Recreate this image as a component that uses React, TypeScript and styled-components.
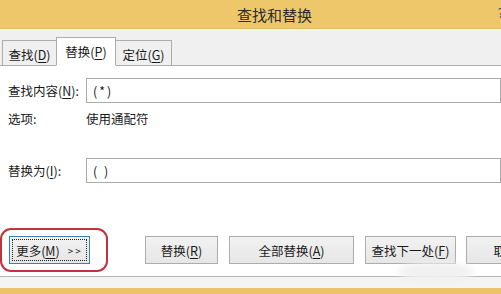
import React from "react";
import styled, { createGlobalStyle } from "styled-components";

const Global = createGlobalStyle`
  html, body { margin: 0; padding: 0; background: #fff; }
  body { font-family: "Noto Sans CJK SC", "Liberation Sans", sans-serif; }
`;

const Window = styled.div`
  width: 501px;
  height: 294px;
  overflow: hidden;
  display: flex;
  flex-direction: column;
  position: relative;
  background: #fff;
  color: #1a1a1a;
  font-size: 12px;
`;

const TitleBar = styled.div`
  height: 28px;
  flex: none;
  background: #efc76b;
  border-bottom: 1px solid #dfbb68;
  display: flex;
  align-items: center;
  padding-left: 237px;
  position: relative;
`;

const Title = styled.span`
  font-size: 15px;
  color: #2b2b2b;
`;

const Help = styled.span`
  position: absolute;
  right: -3px;
  top: 3px;
  font-size: 13px;
  color: #444;
`;

const TabStrip = styled.div`
  height: 36px;
  flex: none;
  background: #f0f0f0;
  border-bottom: 1px solid #adadad;
  display: flex;
  align-items: flex-end;
  padding-left: 3px;
`;

const Tab = styled.div<{ $active?: boolean; $w: number }>`
  width: ${(p) => p.$w}px;
  height: ${(p) => (p.$active ? "29px" : "26px")};
  margin-bottom: -1px;
  margin-left: -1px;
  box-sizing: border-box;
  padding: ${(p) => (p.$active ? "0" : "2px 0 0")};
  display: flex;
  align-items: center;
  justify-content: center;
  white-space: nowrap;
  font-size: 12.5px;
  color: #1a1a1a;
  background: ${(p) => (p.$active ? "#ffffff" : "#f0f0f0")};
  border: 1px solid #adadad;
  border-bottom-color: ${(p) => (p.$active ? "#ffffff" : "#adadad")};
  z-index: ${(p) => (p.$active ? 1 : 0)};
`;

const U = styled.span`
  text-decoration: underline;
  text-underline-offset: 2px;
`;

const Body = styled.div`
  flex: 1;
  display: flex;
  flex-direction: column;
  padding: 12px 0 0 8px;
  position: relative;
`;

const FieldRow = styled.div<{ $mt?: number }>`
  display: flex;
  align-items: center;
  margin-top: ${(p) => p.$mt ?? 0}px;
`;

const Label = styled.div`
  width: 78px;
  flex: none;
  font-size: 12.5px;
  color: #1a1a1a;
  white-space: nowrap;
`;

const OptionLabel = styled(Label)`
  height: 22px;
  display: flex;
  align-items: center;
`;

const Input = styled.div`
  width: 420px;
  height: 25px;
  box-sizing: border-box;
  border: 1px solid #a9a9a9;
  background: #fff;
  display: flex;
  align-items: center;
  padding-left: 6px;
  font-size: 12.5px;
  letter-spacing: 2px;
  color: #222;
`;

const OptionText = styled.div`
  font-size: 12.5px;
  color: #1a1a1a;
`;

const ButtonRow = styled.div`
  display: flex;
  align-items: center;
  margin-top: 53px;
  padding-left: 1px;
  position: relative;
`;

const Button = styled.div<{ $w: number; $ml?: number; $focus?: boolean }>`
  width: ${(p) => p.$w}px;
  margin-left: ${(p) => p.$ml ?? 0}px;
  height: 28px;
  flex: none;
  box-sizing: border-box;
  border: 1px solid ${(p) => (p.$focus ? "#3c7fb1" : "#acacac")};
  background: linear-gradient(#f2f2f2, #e6e6e6);
  display: flex;
  align-items: center;
  justify-content: center;
  white-space: nowrap;
  font-size: 12.5px;
  color: #1a1a1a;
  position: relative;
`;

const FocusRect = styled.div`
  position: absolute;
  inset: 2px;
  border: 1px dotted #222;
`;

const Arrows = styled.span`
  margin-left: 8px;
  font-size: 10px;
  letter-spacing: 2px;
`;

const RedMark = styled.div`
  position: absolute;
  left: -10px;
  top: -9px;
  width: 108px;
  height: 44px;
  box-sizing: border-box;
  border: 2px solid #c2323f;
  border-radius: 11px;
`;

const Smudge = styled.div`
  position: absolute;
  left: 398px;
  top: 262px;
  width: 76px;
  height: 20px;
  border-radius: 50%;
  background: rgba(240, 240, 240, 0.95);
  filter: blur(3px);
`;

const Footer = styled.div`
  flex: none;
  height: 17px;
  border-top: 1px solid #b5b5b5;
  background: #f4f4f4;
  display: flex;
  flex-direction: column;
  justify-content: flex-end;
`;

const YellowBar = styled.div`
  height: 6px;
  background: #edc36a;
`;

export default function App() {
  return (
    <>
      <Global />
      <Window>
        <TitleBar>
          <Title>查找和替换</Title>
          <Help>?</Help>
        </TitleBar>
        <TabStrip>
          <Tab $w={55}>
            查找(<U>D</U>)
          </Tab>
          <Tab $active $w={60}>
            替换(<U>P</U>)
          </Tab>
          <Tab $w={57}>
            定位(<U>G</U>)
          </Tab>
        </TabStrip>
        <Body>
          <FieldRow>
            <Label>
              查找内容(<U>N</U>):
            </Label>
            <Input>(*)</Input>
          </FieldRow>
          <FieldRow $mt={4}>
            <OptionLabel>选项:</OptionLabel>
            <OptionText>使用通配符</OptionText>
          </FieldRow>
          <FieldRow $mt={29}>
            <Label>
              替换为(<U>I</U>):
            </Label>
            <Input>( )</Input>
          </FieldRow>
          <ButtonRow>
            <Button $w={81} $focus>
              <FocusRect />
              更多(<U>M</U>)<Arrows>&gt;&gt;</Arrows>
              <RedMark />
            </Button>
            <Button $w={73} $ml={55}>
              替换(<U>R</U>)
            </Button>
            <Button $w={125} $ml={11}>
              全部替换(<U>A</U>)
            </Button>
            <Button $w={91} $ml={11}>
              查找下一处(<U>F</U>)
            </Button>
            <Button $w={80} $ml={10}>
              取消
            </Button>
          </ButtonRow>
        </Body>
        <Footer>
          <YellowBar />
        </Footer>
        <Smudge />
      </Window>
    </>
  );
}
